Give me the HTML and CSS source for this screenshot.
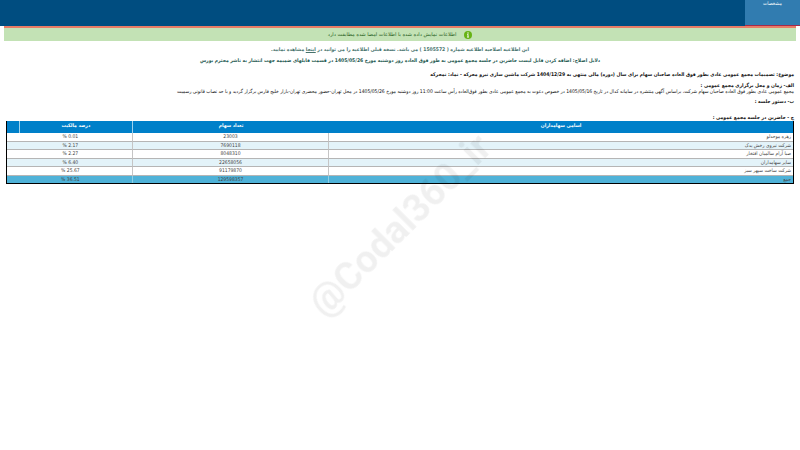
FILE: index.html
```html
<!DOCTYPE html>
<html lang="fa" dir="rtl">
<head>
<meta charset="UTF-8">
<meta name="viewport" content="width=device-width, initial-scale=1.0">
<title>تصمیمات مجمع عمومی</title>
<link rel="stylesheet" href="styles.css">
</head>
<body>
<header class="topbar">
    <a class="tab" href="#">مشخصات</a>
</header>

<main>
    <div class="status">
        <svg class="status-icon" viewBox="0 0 16 16" aria-hidden="true">
            <circle cx="8" cy="8" r="8" fill="#67b315"/>
            <circle cx="8" cy="4" r="1.4" fill="#fff"/>
            <path d="M6 6.5h3v5h1V13H6v-1.5h1V8H6z" fill="#fff"/>
        </svg>
        <span>اطلاعات نمایش داده شده با اطلاعات امضا شده مطابقت دارد</span>
    </div>

    <div class="notice">
        <p>این اطلاعیه اصلاحیه اطلاعیه شماره ( 1505572 ) می باشد. نسخه قبلی اطلاعیه را می توانید در <a href="#">اینجا</a> مشاهده نمایید.</p>
        <p class="reason">دلایل اصلاح: اضافه کردن فایل لیست حاضرین در جلسه مجمع عمومی به طور فوق العاده روز دوشنبه مورخ 1405/05/26 در قسمت فایلهای ضمیمه جهت انتشار به ناشر محترم بورس</p>
    </div>

    <section class="report">
        <h1>موضوع: تصمیمات مجمع عمومی عادی بطور فوق العاده صاحبان سهام برای سال (دوره) مالی منتهی به 1404/12/29 شرکت ماشین سازی نیرو محرکه - نماد: نمحرکه</h1>
        <h2>الف- زمان و محل برگزاری مجمع عمومی :</h2>
        <p class="place">مجمع عمومی عادی بطور فوق العاده صاحبان سهام شرکت، براساس آگهی منتشره در سامانه کدال در تاریخ 1405/05/16 در خصوص دعوت به مجمع عمومی عادی بطور فوق‌العاده رأس ساعت 11:00 روز دوشنبه مورخ 1405/05/26 در محل تهران-حضور محضری تهران-بازار خلیج فارس برگزار گردید و با حد نصاب قانونی رسمیت</p>
        <h2 class="agenda">ب- دستور جلسه :</h2>
        <h2>ج - حاضرین در جلسه مجمع عمومی :</h2>

        <table class="holders">
            <colgroup>
                <col class="col-name">
                <col class="col-count">
                <col>
                <col class="col-scroll">
            </colgroup>
            <thead>
                <tr>
                    <th>اسامی سهامداران</th>
                    <th>تعداد سهام</th>
                    <th>درصد مالکیت</th>
                    <th></th>
                </tr>
            </thead>
            <tbody>
                <tr><td>زهره موحدلو</td><td>23003</td><td colspan="2" dir="ltr">% 0.01</td></tr>
                <tr><td>شرکت نیروی رخش یدک</td><td>7690118</td><td colspan="2" dir="ltr">% 2.17</td></tr>
                <tr><td>صبا آرام سالمیان افتخار</td><td>8048310</td><td colspan="2" dir="ltr">% 2.27</td></tr>
                <tr><td>سایر سهامداران</td><td>22658056</td><td colspan="2" dir="ltr">% 6.40</td></tr>
                <tr><td>شرکت ساخت سپهر سبز</td><td>91179870</td><td colspan="2" dir="ltr">% 25.67</td></tr>
                <tr class="total"><td>جمع</td><td>129598357</td><td colspan="2" dir="ltr">% 36.51</td></tr>
            </tbody>
        </table>
    </section>
</main>

<div class="watermark" dir="ltr">@Codal360_ir</div>
</body>
</html>
```
FILE: styles.css
```css
* {
    box-sizing: border-box;
}
body {
    margin: 0;
    background-color: #fff;
    color: #111;
    font-family: "DejaVu Sans Condensed", "DejaVu Sans", sans-serif;
    font-size: 5px;
    line-height: 7px;
}
h1, h2, p {
    margin: 0;
    font-size: 5px;
}
.topbar {
    display: flex;
    height: 26px;
    background-color: #004d80;
}
.tab {
    width: 55px;
    border-bottom: 1px solid #a52a4b;
    background-color: #317cb0;
    color: #fff;
    text-align: center;
    text-decoration: none;
}
.status {
    display: flex;
    align-items: center;
    justify-content: center;
    gap: 8px;
    height: 15px;
    margin: 0 4px;
    border-top: 2px solid #e87c66;
    background-color: #c3e2b5;
    color: #27601c;
    font-family: "DejaVu Sans", sans-serif;
}
.status-icon {
    width: 8px;
    height: 8px;
}
.notice {
    padding-top: 5px;
    color: #47736d;
    font-weight: bold;
    text-align: center;
}
.notice p {
    margin-bottom: 4px;
}
.notice a {
    color: inherit;
}
.notice .reason {
    margin-bottom: 3px;
    color: #245950;
}
.report {
    padding: 4px 6px;
}
.report h1 {
    margin-bottom: 4px;
}
.place {
    line-height: 5px;
}
.agenda {
    margin: 4px 0 9px;
}
.holders {
    width: 100%;
    height: 63px;
    table-layout: fixed;
    border-right: 1px solid #000;
    border-bottom: 1px solid #000;
    border-left: 1px solid #000;
    border-spacing: 0;
    color: #444;
}
.col-name {
    width: 59%;
}
.col-count {
    width: 25%;
}
.col-scroll {
    width: 13px;
}
.holders th {
    height: 12px;
    padding: 1px 0 0;
    background-color: #0080c9;
    color: #fff;
    vertical-align: top;
}
.holders th:nth-child(n+3) {
    border-right: 1px solid #9ed2ee;
}
.holders td {
    padding: 0;
    border-bottom: 1px solid #b5b5b5;
    text-align: center;
}
.holders td + td {
    border-right: 1px solid #c5c5c5;
}
.holders td:first-child {
    padding-right: 2px;
    text-align: right;
}
.holders tbody tr:nth-child(even) {
    background-color: #e3f3f9;
}
.holders tbody tr.total {
    background-color: #4fb2d8;
}
.holders .total td {
    border-color: #8fcfe6;
    border-bottom: 0;
}
.watermark {
    position: fixed;
    top: 50%;
    left: 50%;
    color: rgba(0, 0, 0, 0.06);
    font-family: Roboto, sans-serif;
    font-size: 38px;
    font-weight: bold;
    line-height: 48px;
    transform: translate(-50%, -50%) rotate(-45deg);
    pointer-events: none;
}
```
